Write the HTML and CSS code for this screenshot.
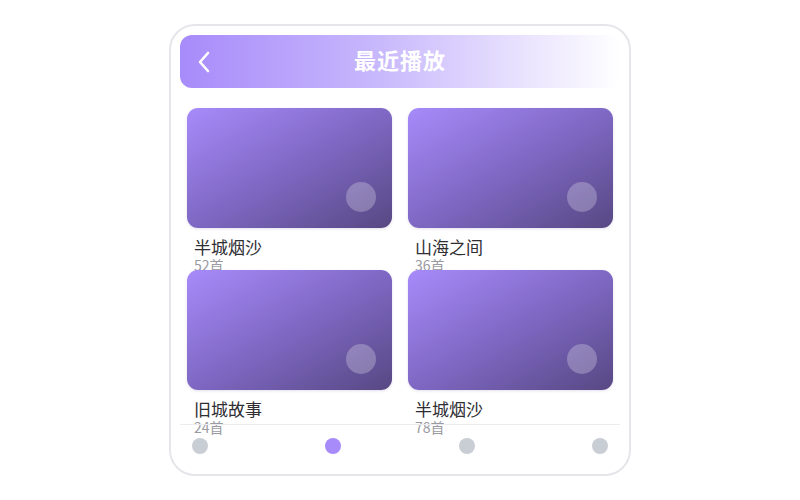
FILE: index.html
```html
<!DOCTYPE html>
<html lang="zh">
<head>
    <meta charset="UTF-8">
    <meta name="viewport" content="width=device-width, initial-scale=1.0">
    <title>最近播放</title>
    <link rel="stylesheet" href="styles.css">
</head>
<body>

<div class="phone">
    <div class="header">
        <svg class="back" width="14" height="22" viewBox="0 0 14 22">
            <path d="M11 2 L3 11 L11 20" fill="none" stroke="#fff" stroke-width="2.6" stroke-linecap="round" stroke-linejoin="round"/>
        </svg>
        <h1>最近播放</h1>
    </div>

    <div class="main">
        <div class="grid">
            <div class="item">
                <div class="cover"><span class="play"></span></div>
                <div class="name">半城烟沙</div>
                <div class="count">52首</div>
            </div>
            <div class="item">
                <div class="cover"><span class="play"></span></div>
                <div class="name">山海之间</div>
                <div class="count">36首</div>
            </div>
            <div class="item">
                <div class="cover"><span class="play"></span></div>
                <div class="name">旧城故事</div>
                <div class="count">24首</div>
            </div>
            <div class="item">
                <div class="cover"><span class="play"></span></div>
                <div class="name">半城烟沙</div>
                <div class="count">78首</div>
            </div>
        </div>
    </div>

    <div class="nav">
        <span class="dot"></span>
        <span class="dot active"></span>
        <span class="dot"></span>
        <span class="dot"></span>
    </div>
</div>

</body>
</html>
```

FILE: styles.css
```css
body {
    margin: 0;
    padding: 0;
    background-color: #fff;
    font-family: "Noto Sans CJK SC", "Noto Sans", sans-serif;
}
.phone {
    box-sizing: border-box;
    width: 462px;
    height: 452px;
    margin: 24px 0 0 169px;
    padding: 9px;
    border: 2px solid #e6e6ea;
    border-radius: 26px;
    background-color: #fff;
    display: flex;
    flex-direction: column;
}
.header {
    position: relative;
    box-sizing: border-box;
    height: 53px;
    flex-shrink: 0;
    padding-bottom: 5px;
    border-radius: 12px;
    background: linear-gradient(90deg, #a78bfa 0%, #c8b8fc 45%, #ffffff 100%);
    display: flex;
    align-items: center;
    justify-content: center;
}
.back {
    position: absolute;
    left: 17px;
    top: 16px;
}
h1 {
    margin: 0;
    color: #fff;
    font-size: 22px;
    line-height: 30px;
    font-weight: 700;
    letter-spacing: 1px;
}
.main {
    flex: 1;
    min-height: 0;
    padding: 20px 7px 0;
}
.grid {
    display: grid;
    grid-template-columns: 1fr 1fr;
    grid-auto-rows: 146px;
    column-gap: 16px;
    row-gap: 16px;
}
.item {
    min-width: 0;
}
.cover {
    position: relative;
    height: 120px;
    border-radius: 11px;
    background: linear-gradient(150deg, #a78bfa 0%, #7f68c4 50%, #574883 100%);
    box-shadow: 0 1px 3px rgba(60, 40, 120, 0.15);
}
.play {
    position: absolute;
    right: 16px;
    bottom: 16px;
    width: 30px;
    height: 30px;
    border-radius: 50%;
    background-color: rgba(255, 255, 255, 0.25);
}
.name {
    margin-top: 10px;
    padding-left: 7px;
    font-size: 17px;
    line-height: 17px;
    color: #2e2e33;
}
.count {
    margin-top: 2px;
    padding-left: 7px;
    font-size: 14px;
    line-height: 16px;
    color: #9a9aa2;
}
.nav {
    box-sizing: border-box;
    height: 41px;
    flex-shrink: 0;
    border-top: 1px solid #ececf0;
    padding: 13px 12px 0;
    display: flex;
    justify-content: space-between;
    align-items: flex-start;
}
.dot {
    width: 16px;
    height: 16px;
    border-radius: 50%;
    background-color: #c9cdd4;
}
.dot.active {
    background-color: #a78bfa;
}
```
